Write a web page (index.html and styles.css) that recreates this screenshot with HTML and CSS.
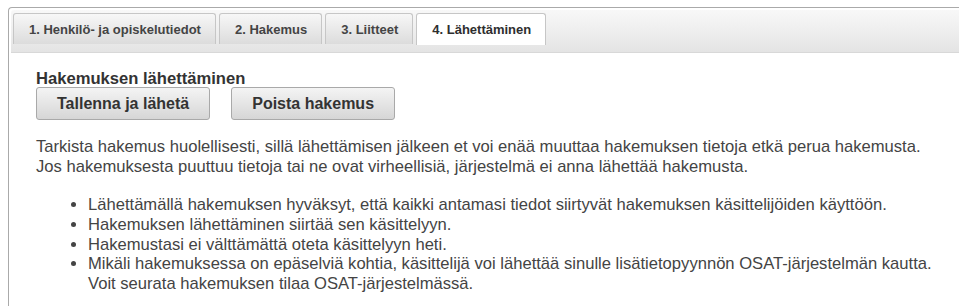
FILE: index.html
```html
<!DOCTYPE html>
<html lang="fi">
<head>
<meta charset="utf-8">
<title>Hakemus</title>
<link rel="stylesheet" href="styles.css">
</head>
<body>
<div class="panel">
  <ul class="tabs">
    <li class="tab">1. Henkilö- ja opiskelutiedot</li>
    <li class="tab">2. Hakemus</li>
    <li class="tab">3. Liitteet</li>
    <li class="tab active">4. Lähettäminen</li>
  </ul>
  <div class="content">
    <h3 class="title">Hakemuksen lähettäminen</h3>
    <div class="actions">
      <button class="btn">Tallenna ja lähetä</button>
      <button class="btn">Poista hakemus</button>
    </div>
    <p class="intro">Tarkista hakemus huolellisesti, sillä lähettämisen jälkeen et voi enää muuttaa hakemuksen tietoja etkä perua hakemusta.<br>Jos hakemuksesta puuttuu tietoja tai ne ovat virheellisiä, järjestelmä ei anna lähettää hakemusta.</p>
    <ul class="notes">
      <li>Lähettämällä hakemuksen hyväksyt, että kaikki antamasi tiedot siirtyvät hakemuksen käsittelijöiden käyttöön.</li>
      <li>Hakemuksen lähettäminen siirtää sen käsittelyyn.</li>
      <li>Hakemustasi ei välttämättä oteta käsittelyyn heti.</li>
      <li>Mikäli hakemuksessa on epäselviä kohtia, käsittelijä voi lähettää sinulle lisätietopyynnön OSAT-järjestelmän kautta.<br>Voit seurata hakemuksen tilaa OSAT-järjestelmässä.</li>
    </ul>
  </div>
</div>
</body>
</html>
```
FILE: styles.css
```css
html, body {
  margin: 0;
  padding: 0;
  background: #fff;
  overflow: hidden;
}
body {
  font-family: "Liberation Sans", Arial, sans-serif;
  color: #444;
}
.panel {
  margin: 7px 0 0 8px;
  border: 1px solid #aaa;
  border-right: none;
  border-bottom: none;
  border-top-left-radius: 4px;
  padding: 2px 0 0 2px;
  height: 320px;
}
.tabs {
  list-style: none;
  margin: 0;
  padding: 3px 0 0 2px;
  height: 39px;
  display: flex;
  gap: 3px;
  align-items: flex-start;
  background: linear-gradient(#f8f8f8, #e4e4e4);
  border-bottom: 1px solid #d8d8d8;
  border-top-left-radius: 3px;
}
.tab {
  height: 31px;
  box-sizing: border-box;
  padding: 0 14px 0 15px;
  display: flex;
  align-items: center;
  font-size: 13px;
  font-weight: bold;
  color: #444;
  border: 1px solid #c6c6c6;
  border-bottom: none;
  border-radius: 3px 3px 0 0;
  background: linear-gradient(#f7f7f7, #dcdcdc);
}
.tab.active {
  background: #fff;
  color: #2e2e2e;
  height: 32px;
}
.content {
  padding: 16px 0 0 25px;
}
.title {
  margin: 0;
  font-size: 16.6px;
  font-weight: bold;
  color: #333;
  line-height: 19px;
}
.actions {
  display: flex;
  gap: 21px;
  margin-top: -1px;
}
.btn {
  height: 33px;
  padding: 0 20px;
  font-family: "Liberation Sans", Arial, sans-serif;
  font-size: 16px;
  font-weight: bold;
  color: #333;
  border: 1px solid #a9a9a9;
  border-radius: 3px;
  background: linear-gradient(#f4f4f4, #d6d6d6);
}
.intro {
  margin: 17px 0 0;
  font-size: 16.6px;
  line-height: 20px;
}
.notes {
  margin: 18px 0 0;
  padding-left: 52px;
  font-size: 16.6px;
  line-height: 19.8px;
}
```
